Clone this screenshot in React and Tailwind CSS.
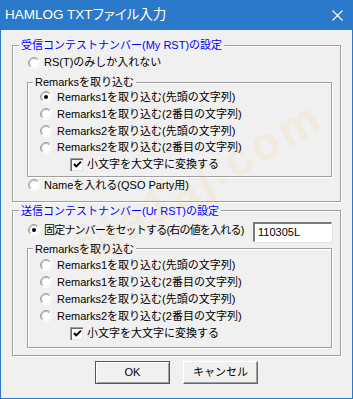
import React from "react";

const font = "font-['Liberation_Sans','Noto_Sans_CJK_JP',sans-serif]";

function Radio({ checked }) {
  return (
    <svg width="12" height="12" viewBox="0 0 12 12" className="shrink-0">
      <defs>
        <linearGradient id="rg-out" x1="0" y1="0" x2="1" y2="1">
          <stop offset="0.45" stopColor="#a0a0a0" />
          <stop offset="0.55" stopColor="#ffffff" />
        </linearGradient>
        <linearGradient id="rg-in" x1="0" y1="0" x2="1" y2="1">
          <stop offset="0.45" stopColor="#6a6a6a" />
          <stop offset="0.55" stopColor="#e3e3e3" />
        </linearGradient>
      </defs>
      <circle cx="6" cy="6" r="5.5" fill="#fff" stroke="url(#rg-out)" />
      <circle cx="6" cy="6" r="4.5" fill="none" stroke="url(#rg-in)" strokeOpacity="0.5" />
      {checked && <circle cx="6" cy="6" r="2" fill="#000" />}
    </svg>
  );
}

function Check() {
  return (
    <div className="w-[13px] h-[13px] shrink-0 bg-white border-t border-l border-[#a0a0a0] border-r-white border-b-white shadow-[inset_1px_1px_0_#696969,inset_-1px_-1px_0_#e3e3e3] flex items-center justify-center">
      <svg width="9" height="9" viewBox="0 0 9 9">
        <path d="M1 4 L3.2 6.4 L8 1.6" stroke="#000" strokeWidth="1.9" fill="none" />
      </svg>
    </div>
  );
}

function RadioRow({ checked, gap, h, children }) {
  return (
    <div className={"flex items-center " + gap + " " + h}>
      <Radio checked={checked} />
      <span className="whitespace-nowrap">{children}</span>
    </div>
  );
}

function RemarksGroup({ rowH, pad, first }) {
  const rows = [
    "Remarks1を取り込む(先頭の文字列)",
    "Remarks1を取り込む(2番目の文字列)",
    "Remarks2を取り込む(先頭の文字列)",
    "Remarks2を取り込む(2番目の文字列)",
  ];
  return (
    <fieldset className={"ml-[14px] w-[305px] border border-[#a0a0a0] shadow-[1px_1px_0_#fff,inset_1px_1px_0_#fff] " + pad}>
      <legend className="ml-[5px] px-[2px] leading-[14px] bg-[#f0f0f0]">Remarksを取り込む</legend>
      <div className="pl-[12px]">
        {rows.map((r, i) => (
          <RadioRow key={i} checked={first && i === 0} gap="gap-[5px]" h={rowH}>
            {r}
          </RadioRow>
        ))}
        <div className={"flex items-center gap-[4px] pl-[30px] " + rowH}>
          <Check />
          <span>小文字を大文字に変換する</span>
        </div>
      </div>
    </fieldset>
  );
}

export default function App() {
  return (
    <div className={"w-[353px] h-[399px] bg-[#f0f0f0] border-x border-b border-[#2b79cb] text-[11px] text-black relative overflow-hidden " + font}>
      <div className="h-[30px] bg-[#2b79cb] flex items-center pl-[4px] pr-[9px] text-white">
        <span className="text-[13.5px] [font-feature-settings:'palt']">HAMLOG TXTファイル入力</span>
        <svg className="ml-auto" width="11" height="11" viewBox="0 0 11 11">
          <path d="M0.5 0.5 L10.5 10.5 M10.5 0.5 L0.5 10.5" stroke="#fff" strokeWidth="1.1" />
        </svg>
      </div>

      <div className="pl-[11px]">
        <fieldset className="mt-[8px] w-[329px] border border-[#a0a0a0] shadow-[1px_1px_0_#fff,inset_1px_1px_0_#fff] pb-[7px]">
          <legend className="ml-[6px] px-[2px] leading-[14px] bg-[#f0f0f0] text-[#0000ff]">
            受信コンテストナンバー(My RST)の設定
          </legend>
          <div className="pl-[15px] mt-[2px]">
            <RadioRow gap="gap-[4px]" h="h-[17px]">RS(T)のみしか入れない</RadioRow>
          </div>
          <div className="mt-[4px]">
            <RemarksGroup rowH="h-[16.75px]" pad="pb-[3px]" first />
          </div>
          <div className="pl-[15px]">
            <RadioRow gap="gap-[4px]" h="h-[17px]">Nameを入れる(QSO Party用)</RadioRow>
          </div>
        </fieldset>

        <fieldset className="mt-[2px] w-[329px] border border-[#a0a0a0] shadow-[1px_1px_0_#fff,inset_1px_1px_0_#fff] pb-[7px]">
          <legend className="ml-[6px] px-[2px] leading-[14px] bg-[#f0f0f0] text-[#0000ff]">
            送信コンテストナンバー(Ur RST)の設定
          </legend>
          <div className="mt-[4px] h-[20px] flex items-center pl-[15px] pr-[8px]">
            <div className="mb-[4px] tracking-[-0.8px]">
              <RadioRow checked gap="gap-[4px]" h="h-[17px]">固定ナンバーをセットする(右の値を入れる)</RadioRow>
            </div>
            <div className="ml-auto shrink-0 w-[79px] h-[20px] bg-white border-t-2 border-l-2 border-t-[#7a7a7a] border-l-[#7a7a7a] border-b border-r border-b-white border-r-white shadow-[1px_1px_0_#e3e3e3] flex items-center pl-[3px]">
              110305L
            </div>
          </div>
          <div>
            <RemarksGroup rowH="h-[17px]" pad="pt-[1px] pb-[5px]" />
          </div>
        </fieldset>
      </div>

      <div className="mt-[5px] flex justify-center gap-[13px]">
        <button className="w-[75px] h-[23px] bg-[#f0f0f0] border border-[#555] shadow-[inset_1px_1px_0_#fff,inset_-1px_-1px_0_#a0a0a0] text-[11px]">
          OK
        </button>
        <button className="w-[75px] h-[23px] bg-[#f0f0f0] border border-t-white border-l-white border-b-[#696969] border-r-[#696969] shadow-[inset_-1px_-1px_0_#a0a0a0] text-[11px]">
          キャンセル
        </button>
      </div>

      <div className="pointer-events-none absolute left-[30px] top-[160px] w-[330px] text-center text-[46px] leading-none font-bold text-[#ffa500] opacity-[0.07] -rotate-[30deg] tracking-[4px]">
        ©ja1aj.com
      </div>
    </div>
  );
}
